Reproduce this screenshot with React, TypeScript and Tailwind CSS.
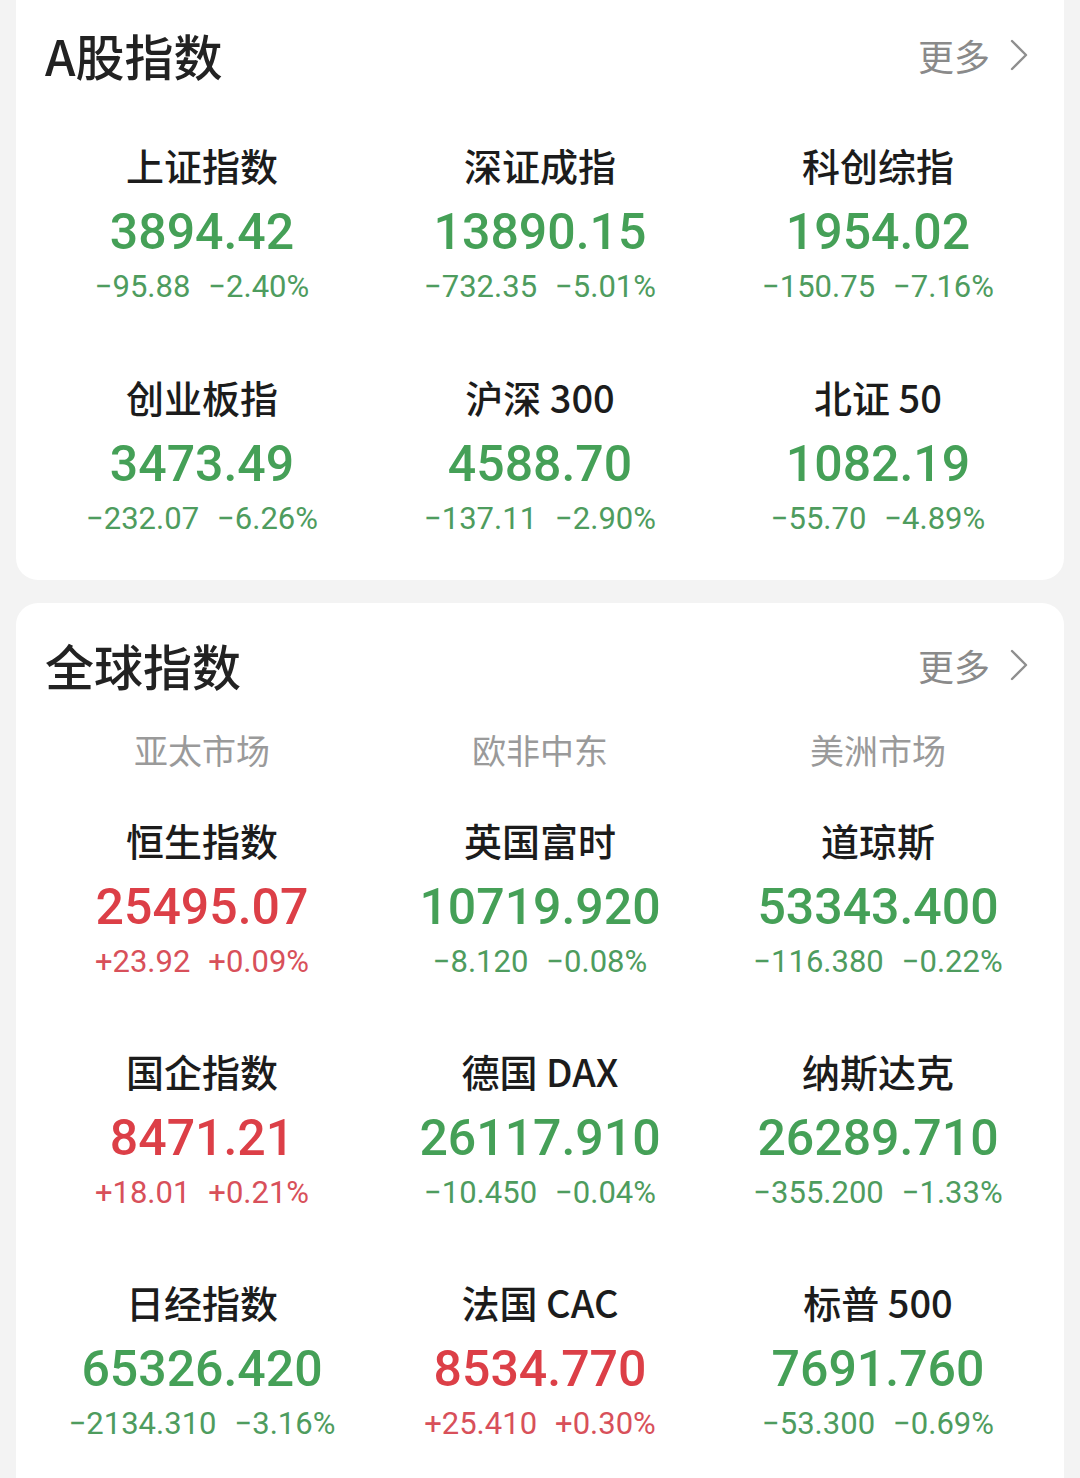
import React from "react";

type Item = { name: string; value: string; chg: string; pct: string; up: boolean };

const aItems: Item[] = [
  { name: "上证指数", value: "3894.42", chg: "−95.88", pct: "−2.40%", up: false },
  { name: "深证成指", value: "13890.15", chg: "−732.35", pct: "−5.01%", up: false },
  { name: "科创综指", value: "1954.02", chg: "−150.75", pct: "−7.16%", up: false },
  { name: "创业板指", value: "3473.49", chg: "−232.07", pct: "−6.26%", up: false },
  { name: "沪深 300", value: "4588.70", chg: "−137.11", pct: "−2.90%", up: false },
  { name: "北证 50", value: "1082.19", chg: "−55.70", pct: "−4.89%", up: false },
];

const gItems: Item[] = [
  { name: "恒生指数", value: "25495.07", chg: "+23.92", pct: "+0.09%", up: true },
  { name: "英国富时", value: "10719.920", chg: "−8.120", pct: "−0.08%", up: false },
  { name: "道琼斯", value: "53343.400", chg: "−116.380", pct: "−0.22%", up: false },
  { name: "国企指数", value: "8471.21", chg: "+18.01", pct: "+0.21%", up: true },
  { name: "德国 DAX", value: "26117.910", chg: "−10.450", pct: "−0.04%", up: false },
  { name: "纳斯达克", value: "26289.710", chg: "−355.200", pct: "−1.33%", up: false },
  { name: "日经指数", value: "65326.420", chg: "−2134.310", pct: "−3.16%", up: false },
  { name: "法国 CAC", value: "8534.770", chg: "+25.410", pct: "+0.30%", up: true },
  { name: "标普 500", value: "7691.760", chg: "−53.300", pct: "−0.69%", up: false },
];

const cjk = { fontFamily: '"Noto Sans CJK SC", "Noto Sans", sans-serif' };
const num = { fontFamily: 'Roboto, "Noto Sans", sans-serif' };

function Cell({ it }: { it: Item }) {
  return (
    <div className="flex flex-col items-center">
      <div className="text-[38px] leading-[50px] font-medium text-[#1c1c1c]" style={cjk}>
        {it.name}
      </div>
      <div
        className={`mt-[7px] text-[50px] leading-[70px] font-medium ${it.up ? "text-[#dc3f47]" : "text-[#45a057]"}`}
        style={num}
      >
        {it.value}
      </div>
      <div
        className={`flex gap-[18px] text-[31px] leading-[40px] ${it.up ? "text-[#d8505a]" : "text-[#4e9c5e]"}`}
        style={num}
      >
        <span>{it.chg}</span>
        <span>{it.pct}</span>
      </div>
    </div>
  );
}

function Header({ title }: { title: string }) {
  return (
    <div className="flex items-center justify-between pl-[29px] pr-[36px]">
      <div className="text-[49px] leading-[56px] font-medium text-[#222]" style={cjk}>
        {title}
      </div>
      <div className="flex items-center gap-[20px] text-[#8a8a8a]">
        <span className="text-[36px] leading-[56px]" style={cjk}>更多</span>
        <svg width="18" height="32" viewBox="0 0 18 32" fill="none">
          <path d="M2 2 L16 16 L2 30" stroke="#8f8f8f" strokeWidth="2.4" strokeLinecap="round" strokeLinejoin="round" />
        </svg>
      </div>
    </div>
  );
}

export default function App() {
  return (
    <div className="w-[1080px] h-[1478px] overflow-hidden bg-[#f3f3f3]">
      <div className="mx-[16px] bg-white rounded-b-[22px] pt-[27px] pb-[41px]">
        <Header title="A股指数" />
        <div className="grid grid-cols-3 px-[17px] mt-[57px] gap-y-[65px]">
          {aItems.map((it) => (
            <Cell key={it.name} it={it} />
          ))}
        </div>
      </div>
      <div className="mx-[16px] mt-[23px] bg-white rounded-t-[22px] pt-[34px] pb-[60px]">
        <Header title="全球指数" />
        <div className="grid grid-cols-3 px-[17px] mt-[35px]">
          {["亚太市场", "欧非中东", "美洲市场"].map((s) => (
            <div key={s} className="text-center text-[34px] leading-[44px] text-[#9a9a9a]" style={cjk}>
              {s}
            </div>
          ))}
        </div>
        <div className="grid grid-cols-3 px-[17px] mt-[43px] gap-y-[64px]">
          {gItems.map((it) => (
            <Cell key={it.name} it={it} />
          ))}
        </div>
      </div>
    </div>
  );
}
